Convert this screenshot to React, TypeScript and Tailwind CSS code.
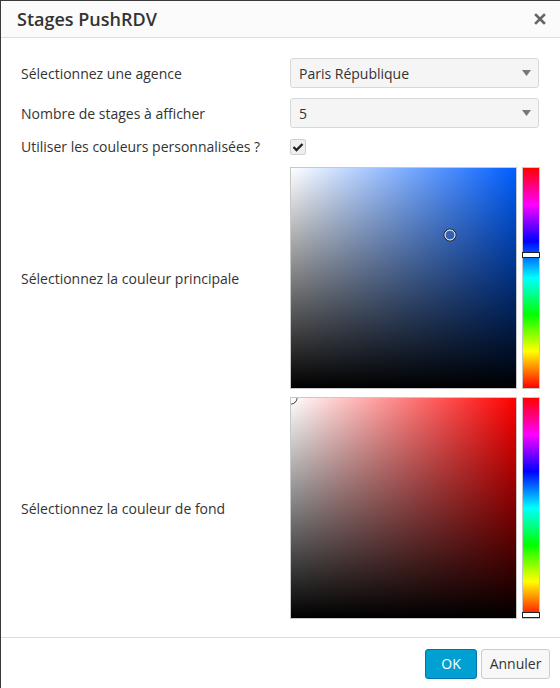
import React from "react";

interface PickerProps {
  hue: string;
  thumbTop: number;
  markerX: number;
  markerY: number;
}

function ColorPicker({ hue, thumbTop, markerX, markerY }: PickerProps) {
  return (
    <div className="flex gap-[5px]">
      <div
        className="relative w-[227px] h-[222px] border border-[#c8c8c8] overflow-hidden"
        style={{ backgroundColor: hue }}
      >
        <div className="absolute inset-0 bg-[linear-gradient(to_right,#fff,rgba(255,255,255,0))]" />
        <div className="absolute inset-0 bg-[linear-gradient(to_top,#000,rgba(0,0,0,0))]" />
        <div
          className="absolute w-[13px] h-[13px] rounded-full border border-[#222] -translate-x-1/2 -translate-y-1/2"
          style={{ left: markerX, top: markerY }}
        >
          <div className="w-full h-full rounded-full border border-white" />
        </div>
      </div>
      <div className="relative w-[18px] h-[222px] border border-[#c8c8c8]">
        <div className="w-full h-full bg-[linear-gradient(to_bottom,#f00,#f0f,#00f,#0ff,#0f0,#ff0,#f00)]" />
        <div
          className="absolute left-[-1px] right-[-1px] h-[6px] bg-white border border-[#222]"
          style={{ top: thumbTop }}
        />
      </div>
    </div>
  );
}

function Select({ value }: { value: string }) {
  return (
    <div className="flex items-center justify-between h-[30px] pl-[8px] pr-[7px] bg-[#f5f5f5] border border-[#d8d8d8] rounded-[3px] text-[14px] text-[#333]">
      <span>{value}</span>
      <svg width="9" height="6" viewBox="0 0 9 6">
        <path d="M0 0 H9 L4.5 6 Z" fill="#777" />
      </svg>
    </div>
  );
}

export default function App() {
  return (
    <div className="w-[560px] h-[688px] bg-white border-t border-l border-[#3a3a3a] flex flex-col font-['Open_Sans',sans-serif] text-[#333]">
      <div className="h-[37px] flex items-center justify-between pl-[16px] pr-[14px] border-b border-[#dddddd] bg-[#fbfbfb]">
        <h1 className="text-[18px] font-semibold text-[#333]">Stages PushRDV</h1>
        <svg width="12" height="12" viewBox="0 0 12 12">
          <path d="M2 2 L10 10 M10 2 L2 10" stroke="#666" strokeWidth="2.6" strokeLinecap="square" />
        </svg>
      </div>

      <div className="flex-1 pt-[20px] pl-[20px] pr-[21px] text-[14px]">
        <div className="grid grid-cols-[269px_1fr] items-center">
          <span>Sélectionnez une agence</span>
          <Select value="Paris République" />
        </div>
        <div className="grid grid-cols-[269px_1fr] items-center mt-[10px]">
          <span>Nombre de stages à afficher</span>
          <Select value="5" />
        </div>
        <div className="grid grid-cols-[269px_1fr] items-center mt-[8px]">
          <span>Utiliser les couleurs personnalisées ?</span>
          <div className="w-[16px] h-[16px] bg-[#efefef] border border-[#d0d0d0] rounded-[2px] flex items-center justify-center">
            <svg width="12" height="10" viewBox="0 0 12 10">
              <path d="M1.5 5 L4.5 8 L10.5 2" stroke="#222" strokeWidth="2.4" fill="none" />
            </svg>
          </div>
        </div>
        <div className="grid grid-cols-[269px_1fr] items-center mt-[10px]">
          <span>Sélectionnez la couleur principale</span>
          <ColorPicker hue="#005eff" thumbTop={84} markerX={159} markerY={67} />
        </div>
        <div className="grid grid-cols-[269px_1fr] items-center mt-[8px]">
          <span>Sélectionnez la couleur de fond</span>
          <ColorPicker hue="#ff0000" thumbTop={214} markerX={0} markerY={0} />
        </div>
      </div>

      <div className="border-t border-[#dddddd] h-[51px] flex items-center justify-end gap-[4px] pr-[10px] pt-[1px]">
        <button className="h-[30px] w-[52px] rounded-[3px] bg-[#00a0d2] border border-[#0073aa] text-white text-[14px]">
          OK
        </button>
        <button className="h-[30px] w-[69px] rounded-[3px] bg-[#f7f7f7] border border-[#cccccc] text-[#333] text-[14px]">
          Annuler
        </button>
      </div>
    </div>
  );
}
